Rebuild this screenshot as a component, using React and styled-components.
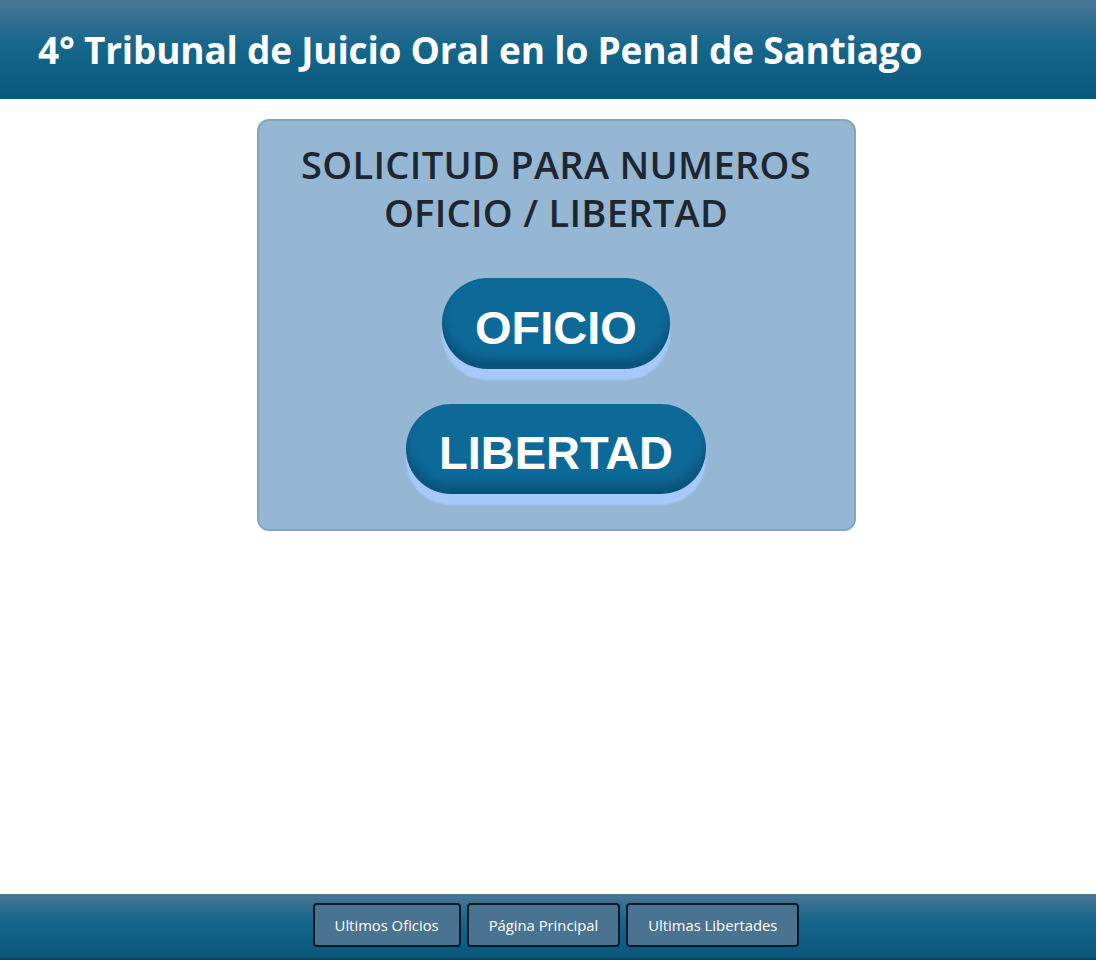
import React from "react";
import styled, { createGlobalStyle } from "styled-components";

const GlobalStyle = createGlobalStyle`
  html, body {
    margin: 0;
    padding: 0;
    background: #ffffff;
  }
  body {
    font-family: "Open Sans", "Noto Sans", sans-serif;
  }
  * {
    box-sizing: border-box;
  }
`;

const Page = styled.div`
  display: flex;
  flex-direction: column;
  min-height: 100vh;
`;

const Header = styled.header`
  height: 99px;
  display: flex;
  align-items: center;
  padding-left: 38px;
  background: linear-gradient(to bottom, #4a7694 0%, #17668c 45%, #09577c 100%);
`;

const Title = styled.h1`
  margin: 0;
  color: #ffffff;
  font-family: "Open Sans", sans-serif;
  font-weight: 700;
  font-size: 37px;
  letter-spacing: -0.2px;
`;

const Main = styled.main`
  flex: 1;
  display: flex;
  justify-content: center;
  padding: 20px 0 0 16px;
`;

const Card = styled.section`
  width: 599px;
  height: 412px;
  background: #95b7d3;
  border: 2px solid #86a6bf;
  border-radius: 12px;
  display: flex;
  flex-direction: column;
  align-items: center;
  padding-top: 19px;
`;

const CardTitle = styled.h2`
  margin: 0 0 42px;
  text-align: center;
  color: #1e2731;
  font-family: "Open Sans", sans-serif;
  font-weight: 600;
  font-size: 38px;
  line-height: 48px;
  letter-spacing: 0.3px;
`;

const Pill = styled.button`
  border: none;
  border-radius: 50px;
  background: #0d6a98;
  color: #ffffff;
  font-family: "Liberation Sans", Arial, sans-serif;
  font-weight: 700;
  font-size: 47px;
  height: 93px;
  padding: 8px 33px 0;
  margin-bottom: 35px;
  cursor: pointer;
  box-shadow: inset 0 -10px 10px rgba(0, 30, 60, 0.3), 0 11px 2px #a7c8fb;
`;

const Footer = styled.footer`
  height: 66px;
  display: flex;
  justify-content: center;
  align-items: flex-start;
  gap: 6px;
  padding: 9px 0 0 16px;
  background: linear-gradient(to bottom, #4a7694 0%, #17668c 40%, #09577c 95%, #0c3d52 100%);
`;

const NavButton = styled.button`
  height: 44px;
  padding: 0 20px;
  background: #4a7391;
  color: #ffffff;
  border: 2px solid #0d1a26;
  border-radius: 4px;
  font-family: "Open Sans", sans-serif;
  font-size: 14.8px;
  cursor: pointer;
`;

export default function App() {
  return (
    <Page>
      <GlobalStyle />
      <Header>
        <Title>4° Tribunal de Juicio Oral en lo Penal de Santiago</Title>
      </Header>
      <Main>
        <Card>
          <CardTitle>
            SOLICITUD PARA NUMEROS
            <br />
            OFICIO / LIBERTAD
          </CardTitle>
          <Pill>OFICIO</Pill>
          <Pill>LIBERTAD</Pill>
        </Card>
      </Main>
      <Footer>
        <NavButton>Ultimos Oficios</NavButton>
        <NavButton>Página Principal</NavButton>
        <NavButton>Ultimas Libertades</NavButton>
      </Footer>
    </Page>
  );
}
